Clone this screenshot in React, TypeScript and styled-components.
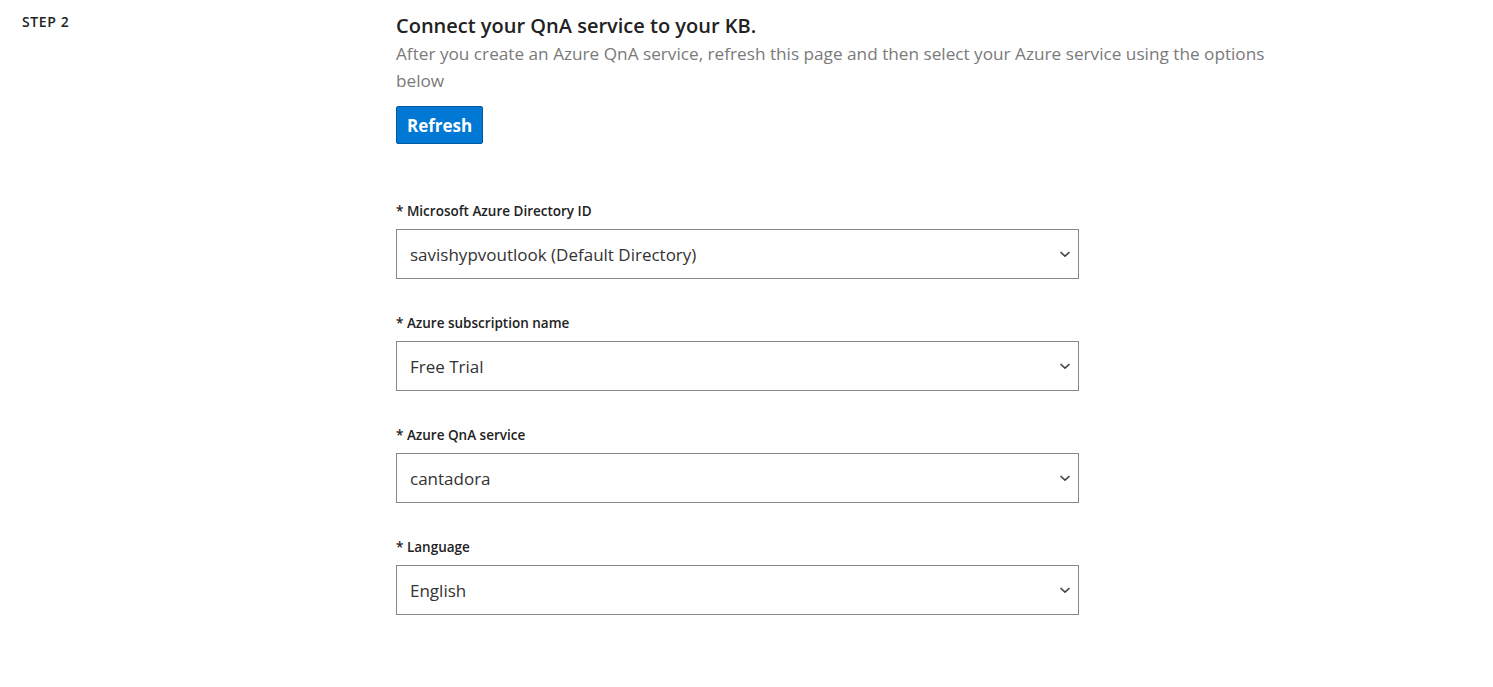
import styled, { createGlobalStyle } from "styled-components";

const GlobalStyle = createGlobalStyle`
  body {
    margin: 0;
    background: #ffffff;
    font-family: "Open Sans", "Noto Sans", sans-serif;
    color: #222222;
  }
`;

const Page = styled.div`
  display: grid;
  grid-template-columns: 374px 885px;
  padding: 12px 22px 0;
`;

const StepTag = styled.div`
  font-size: 14px;
  font-weight: 600;
  letter-spacing: 0.6px;
  color: #222222;
`;

const Main = styled.div`
  display: flex;
  flex-direction: column;
`;

const Title = styled.h2`
  margin: 0;
  font-size: 20px;
  line-height: 28px;
  font-weight: 600;
  color: #222222;
`;

const Description = styled.p`
  margin: 0;
  font-size: 17.2px;
  line-height: 27px;
  color: #7a7a7a;
`;

const RefreshButton = styled.button`
  align-self: flex-start;
  margin-top: 12px;
  height: 38px;
  padding: 0 10px;
  border: 1px solid #005a9e;
  border-radius: 2px;
  background: #0078d4;
  color: #ffffff;
  font-family: inherit;
  font-size: 17px;
  font-weight: 700;
  cursor: pointer;
`;

const Fields = styled.div`
  display: flex;
  flex-direction: column;
  gap: 35px;
  margin-top: 58px;
  width: 683px;
`;

const Field = styled.div`
  display: flex;
  flex-direction: column;
  gap: 9px;
`;

const Label = styled.label`
  font-size: 13.5px;
  font-weight: 600;
  color: #222222;
`;

const SelectBox = styled.div`
  position: relative;
  height: 50px;
`;

const Select = styled.select`
  width: 100%;
  height: 100%;
  appearance: none;
  border: 1px solid #8a8886;
  border-radius: 0;
  background: #ffffff;
  padding: 0 40px 0 13px;
  font-family: inherit;
  font-size: 17px;
  color: #333333;
`;

const Chevron = styled.svg`
  position: absolute;
  right: 8px;
  top: 20px;
  width: 12px;
  height: 10px;
  pointer-events: none;
`;

type FieldDef = { label: string; value: string };

const fields: FieldDef[] = [
  { label: "* Microsoft Azure Directory ID", value: "savishypvoutlook (Default Directory)" },
  { label: "* Azure subscription name", value: "Free Trial" },
  { label: "* Azure QnA service", value: "cantadora" },
  { label: "* Language", value: "English" },
];

const App = () => {
  return (
    <>
      <GlobalStyle />
      <Page>
        <StepTag>STEP 2</StepTag>
        <Main>
          <Title>Connect your QnA service to your KB.</Title>
          <Description>
            After you create an Azure QnA service, refresh this page and then select your Azure service using the options below
          </Description>
          <RefreshButton>Refresh</RefreshButton>
          <Fields>
            {fields.map((f) => (
              <Field key={f.label}>
                <Label>{f.label}</Label>
                <SelectBox>
                  <Select defaultValue={f.value}>
                    <option>{f.value}</option>
                  </Select>
                  <Chevron viewBox="0 0 12 10">
                    <path d="M1.5 3 L6 7.2 L10.5 3" fill="none" stroke="#444" strokeWidth="1.6" />
                  </Chevron>
                </SelectBox>
              </Field>
            ))}
          </Fields>
        </Main>
      </Page>
    </>
  );
};

export default App;
